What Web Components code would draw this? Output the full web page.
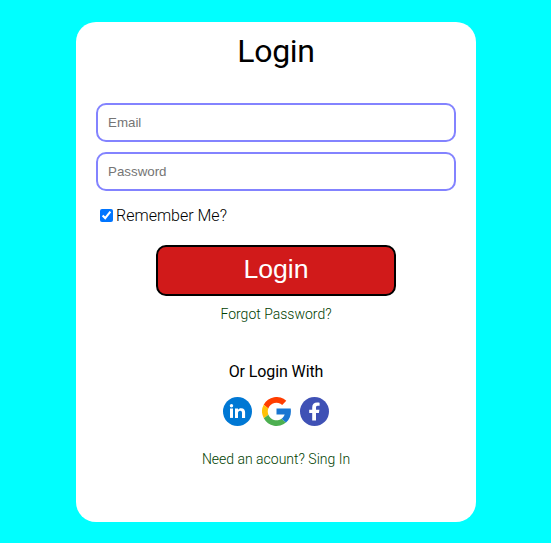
<!DOCTYPE html>
<html lang="en"><head><meta charset="utf-8"><title>Login</title>
<style>
html,body{height:100%}
body{margin:0;background:#0ff;font-family:Roboto,"Liberation Sans",sans-serif;overflow:hidden}
</style></head><body>
<login-card></login-card>
<script>
const define=(name,html)=>customElements.define(name,class extends HTMLElement{
  constructor(){super();this.attachShadow({mode:'open'}).innerHTML=html;}
});
customElements.define('text-field',class extends HTMLElement{
  constructor(){super();this.attachShadow({mode:'open'}).innerHTML=`<style>
  :host{display:block;height:39px}
  input{display:block;box-sizing:border-box;width:100%;height:100%;margin:0;padding:0 10px;border:2px solid #8383ff;border-radius:10px;background:#fff;font:13.333px "Liberation Sans",sans-serif;outline:0}
  input::placeholder{color:#757575}
  </style><input>`;}
  connectedCallback(){const i=this.shadowRoot.querySelector('input');i.type=this.getAttribute('type');i.placeholder=this.getAttribute('label');}
});
define('remember-me',`<style>
:host{display:block}
label{display:flex;align-items:center;font-weight:300;font-size:16px;line-height:19px;color:#000}
input{width:13px;height:13px;margin:0 3px 0 4px}
</style><label><input type="checkbox" checked><slot></slot></label>`);
define('submit-button',`<style>
:host{display:block;width:240px;height:51px}
button{display:block;box-sizing:border-box;width:100%;height:100%;padding:0 0 2px;border:2px solid #000;border-radius:10px;background:#d11a1a;color:#fff;font:26.667px "Liberation Sans",sans-serif}
</style><button><slot></slot></button>`);
define('text-link',`<style>
:host{display:block;font-size:14px;line-height:16px;font-weight:300}
a{color:#004000;text-decoration:none}
</style><a href="#"><slot></slot></a>`);
const icons={
linkedin:`<circle cx="15" cy="15" r="14.5" fill="#0078d4"/><path fill="#fff" d="M7.5 12h3v9.4h-3z"/><circle cx="9" cy="9.2" r="1.7" fill="#fff"/><path fill="#fff" d="M12.5 12h3v1.3c.6-1 1.6-1.6 3.1-1.6 3 0 4 1.9 4 4.4v5.3h-3.1v-4.8c0-1.3-.3-2.3-1.8-2.3s-2.2 1-2.2 2.3v4.8h-3z"/>`,
google:`<path fill="#ff3d00" d="M2.2 8.2A14.5 14.5 0 0 1 24.8 4.3L20.7 8.4A8.7 8.7 0 0 0 6.8 12z"/><path fill="#ffc107" d="M2.2 8.2 6.8 12a8.7 8.7 0 0 0 .1 6.2l-4.6 3.6A14.5 14.5 0 0 1 2.2 8.2z"/><path fill="#4caf50" d="M2.3 21.8 6.9 18.2A8.7 8.7 0 0 0 20 22.2l4.5 3.8A14.5 14.5 0 0 1 2.3 21.8z"/><path fill="#1976d2" d="M15 12.1h14.2c.8 5.3-.6 10.4-4.7 13.9L20 22.2c1.4-1 2.5-2.4 3.2-4.3H15z"/>`,
facebook:`<circle cx="15" cy="15" r="14.5" fill="#3f51b5"/><path fill="#fff" d="M16.5 24v-7.4h2.9l.5-3.4h-3.4v-1.8c0-1.3.4-2.2 1.6-2.2h2V6.2c-.4 0-1.1-.2-2.5-.2-3 0-4.9 1.6-4.9 5.1v2.1h-3v3.4h3V24z"/>`};
customElements.define('social-icon',class extends HTMLElement{
  constructor(){super();this.attachShadow({mode:'open'}).innerHTML='<style>:host{display:block;width:29px;height:29px}svg{display:block}</style><svg width="29" height="29" viewBox="0.5 0.5 29 29">'+icons[this.getAttribute('name')]+'</svg>';}
});
define('login-card',`<style>
:host{display:flex;justify-content:center;padding:22px 0 0 1px}
section{box-sizing:border-box;width:400px;height:500px;border-radius:20px;background:#fff;padding:10px 20px 0;display:flex;flex-direction:column;align-items:center}
h1{margin:0 0 33px;font-size:32px;font-weight:400;line-height:38px;letter-spacing:-.3px}
text-field,remember-me{width:100%}
.pw{margin-top:10px}
remember-me{margin-top:15px}
submit-button{margin-top:20px}
.forgot{margin-top:10px}
p{margin:40px 0 0;font-size:16px;line-height:19px;letter-spacing:-.1px}
nav{display:flex;gap:9.5px;margin-top:16px}
.signup{margin-top:25px}
</style><section><h1>Login</h1>
<text-field type="email" label="Email"></text-field>
<text-field class="pw" type="password" label="Password"></text-field>
<remember-me>Remember Me?</remember-me>
<submit-button>Login</submit-button>
<text-link class="forgot">Forgot Password?</text-link>
<p>Or Login With</p>
<nav><social-icon name="linkedin"></social-icon><social-icon name="google"></social-icon><social-icon name="facebook"></social-icon></nav>
<text-link class="signup">Need an acount? Sing In</text-link>
</section>`);
</script></body></html>
